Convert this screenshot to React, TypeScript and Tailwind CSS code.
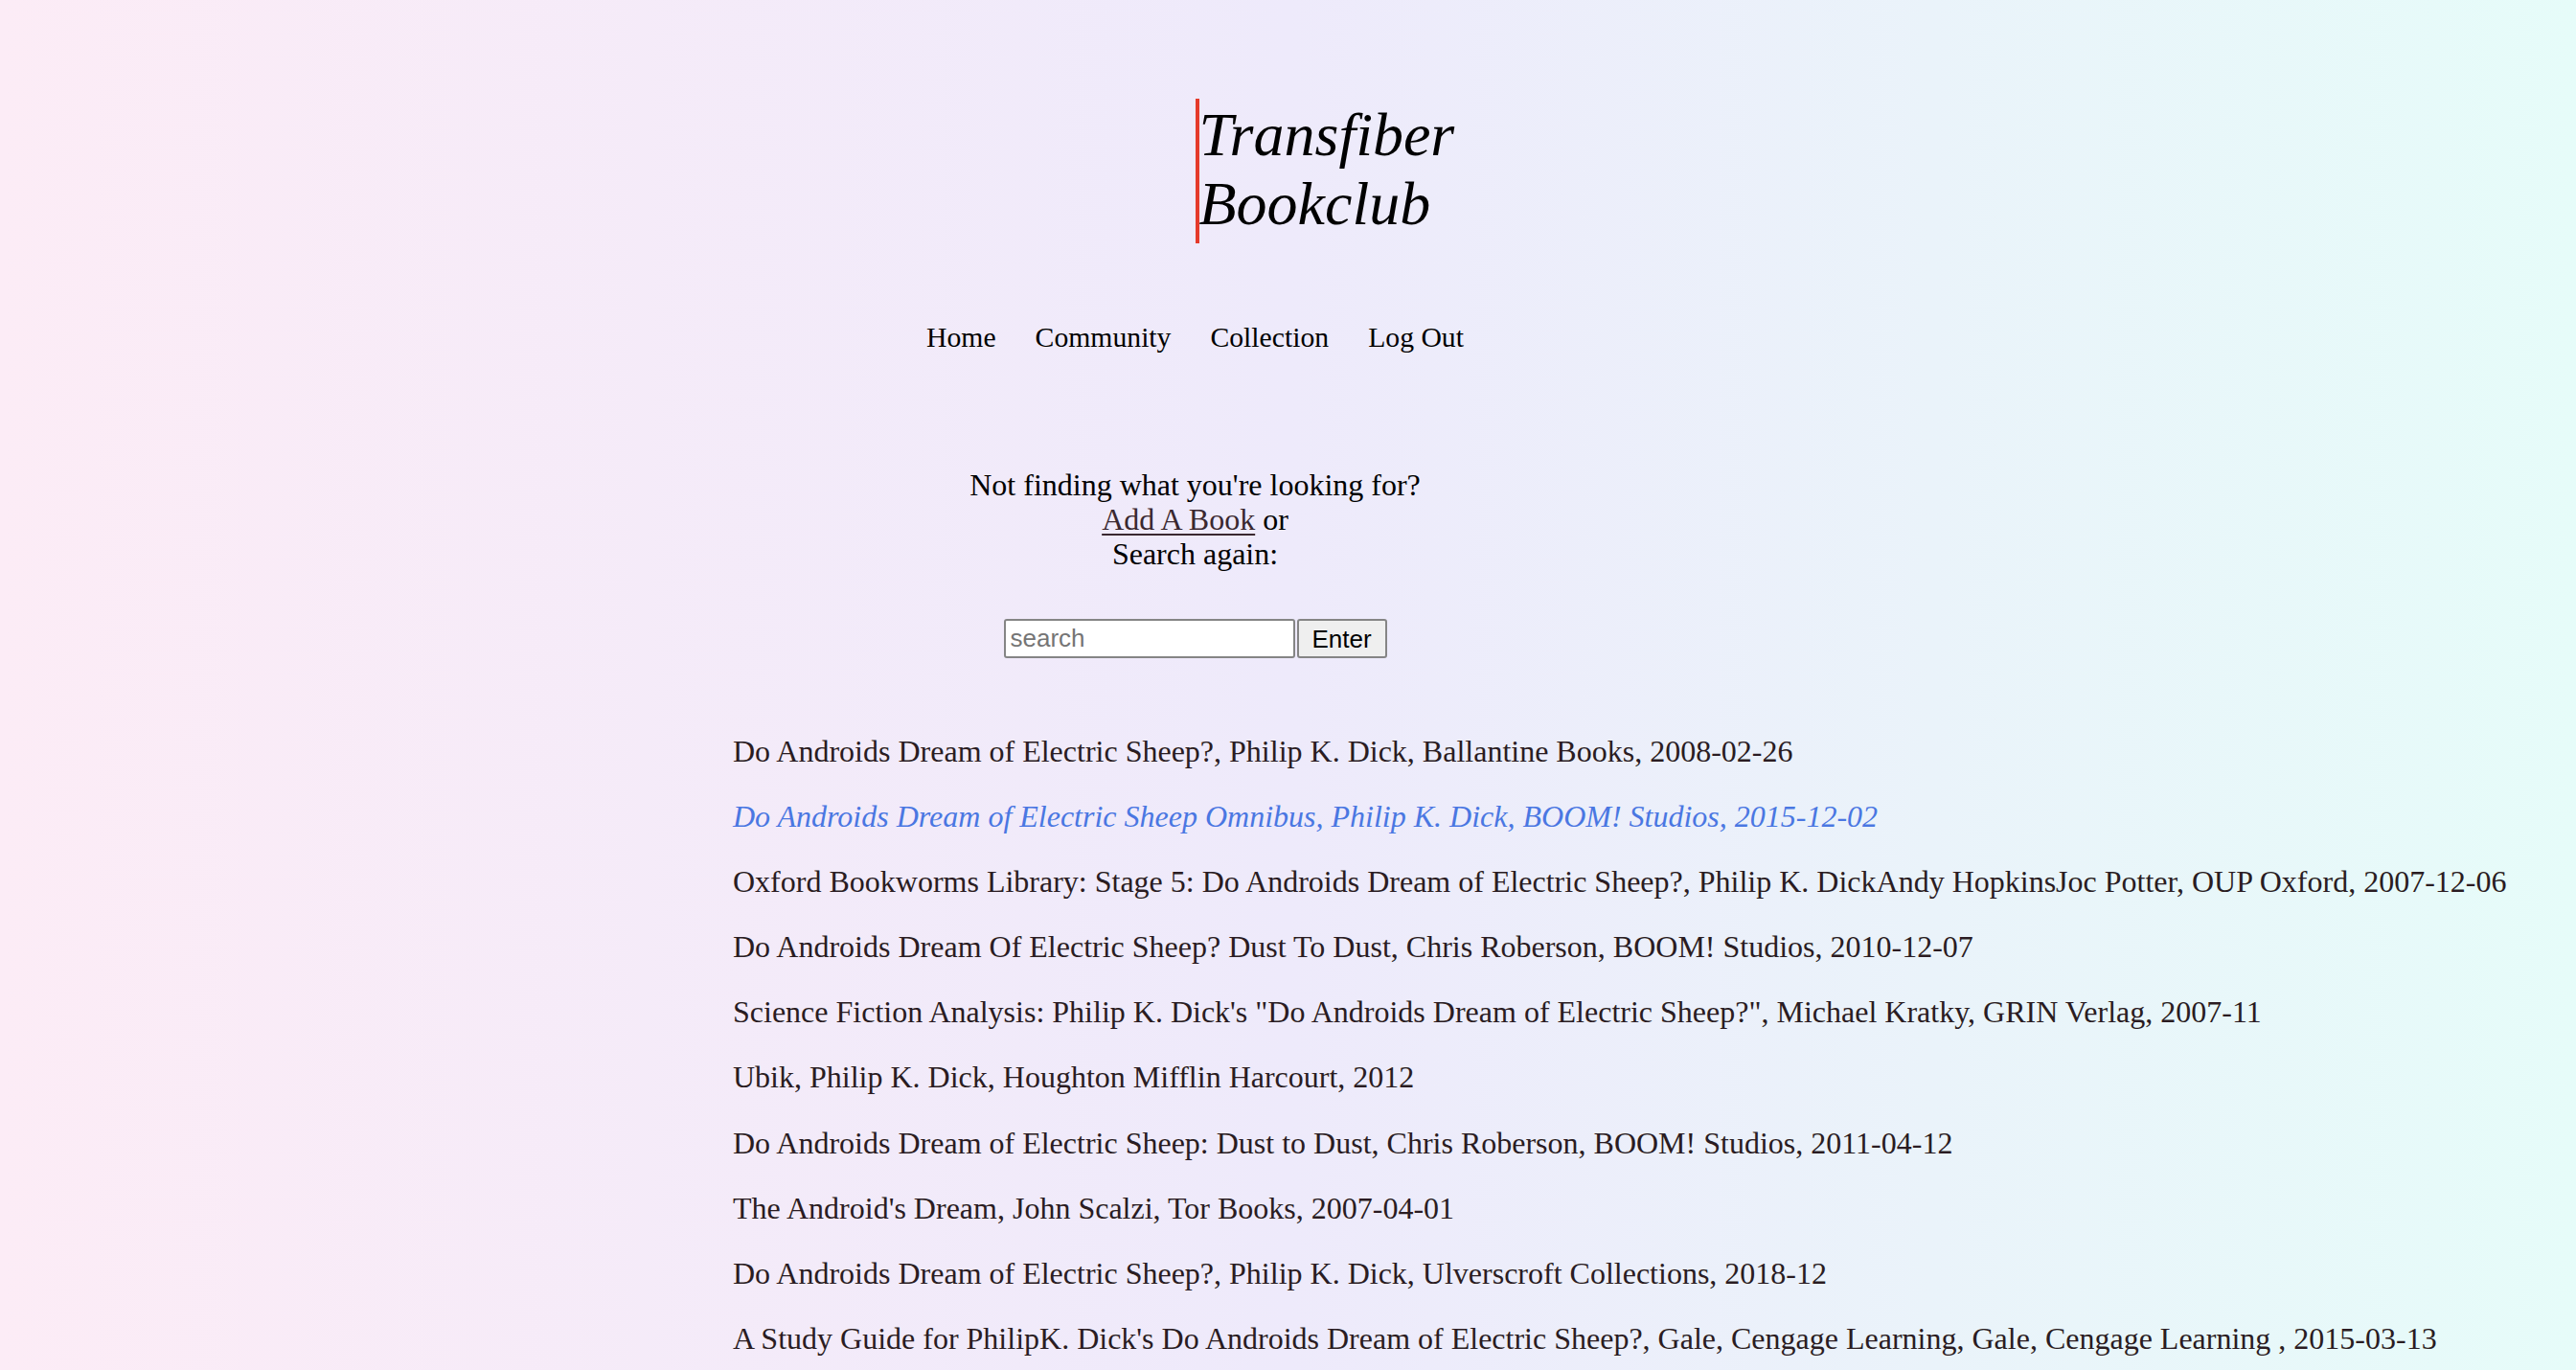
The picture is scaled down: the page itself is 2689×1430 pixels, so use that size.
import React from "react";

const books: { text: string; highlight?: boolean }[] = [
  { text: "Do Androids Dream of Electric Sheep?, Philip K. Dick, Ballantine Books, 2008-02-26" },
  { text: "Do Androids Dream of Electric Sheep Omnibus, Philip K. Dick, BOOM! Studios, 2015-12-02", highlight: true },
  { text: "Oxford Bookworms Library: Stage 5: Do Androids Dream of Electric Sheep?, Philip K. DickAndy HopkinsJoc Potter, OUP Oxford, 2007-12-06" },
  { text: "Do Androids Dream Of Electric Sheep? Dust To Dust, Chris Roberson, BOOM! Studios, 2010-12-07" },
  { text: "Science Fiction Analysis: Philip K. Dick's \"Do Androids Dream of Electric Sheep?\", Michael Kratky, GRIN Verlag, 2007-11" },
  { text: "Ubik, Philip K. Dick, Houghton Mifflin Harcourt, 2012" },
  { text: "Do Androids Dream of Electric Sheep: Dust to Dust, Chris Roberson, BOOM! Studios, 2011-04-12" },
  { text: "The Android's Dream, John Scalzi, Tor Books, 2007-04-01" },
  { text: "Do Androids Dream of Electric Sheep?, Philip K. Dick, Ulverscroft Collections, 2018-12" },
  { text: "A Study Guide for PhilipK. Dick's Do Androids Dream of Electric Sheep?, Gale, Cengage Learning, Gale, Cengage Learning , 2015-03-13" },
];

export default function App() {
  return (
    <div className="min-h-screen w-full overflow-hidden bg-[linear-gradient(to_right,#fcecf6,#eeeafb_50%,#e6fcf9)] font-['Liberation_Serif','Times_New_Roman',serif] text-black">
      <div className="w-[2495px] flex flex-col pt-[103px] pb-[40px]">
        {/* Title */}
        <div className="ml-[50%] self-start">
          <h1 className="border-l-[4px] border-[#e53a2b] pl-0 pt-[2px] pb-[5px] text-[64px] leading-[72px] italic font-normal">
            <div>Transfiber</div>
            <div>Bookclub</div>
          </h1>
        </div>

        {/* Nav */}
        <nav className="mt-[81px] flex justify-center gap-[41px] text-[29.7px] leading-[34px]">
          <a className="cursor-pointer">Home</a>
          <a className="cursor-pointer">Community</a>
          <a className="cursor-pointer">Collection</a>
          <a className="cursor-pointer">Log Out</a>
        </nav>

        {/* Not finding */}
        <div className="mt-[119px] flex flex-col items-center text-[32px] leading-[36px] text-center">
          <div>Not finding what you're looking for?</div>
          <div>
            <a className="underline decoration-[1.5px] underline-offset-[4px] text-[#3a2830] cursor-pointer">Add A Book</a> or
          </div>
          <div>Search again:</div>
        </div>

        {/* Search */}
        <div className="mt-[50px] flex justify-center gap-[2px] font-['Liberation_Sans',Arial,sans-serif] text-[26px]">
          <input
            type="text"
            placeholder="search"
            className="w-[304px] h-[41px] bg-white border-2 border-[#858585] rounded-[3px] pl-[5px] text-black placeholder:text-[#757575] outline-none"
          />
          <button className="w-[94px] h-[41px] bg-[#efefef] border-2 border-[#858585] rounded-[3px] text-black leading-none">
            Enter
          </button>
        </div>

        {/* Results */}
        <div className="mt-[79px] ml-[765px] self-start flex flex-col gap-[31.6px] text-[32px] leading-[36.5px] whitespace-nowrap">
          {books.map((b, i) => (
            <p
              key={i}
              className={b.highlight ? "italic text-[#4a77e2]" : "text-[#2a1c22]"}
            >
              {b.text}
            </p>
          ))}
        </div>
      </div>
    </div>
  );
}
